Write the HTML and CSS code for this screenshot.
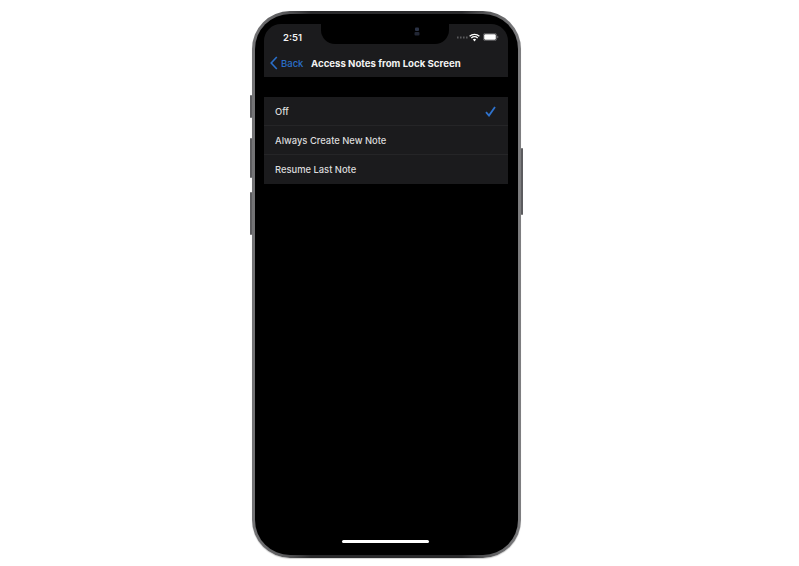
FILE: index.html
```html
<!DOCTYPE html>
<html lang="en">
<head>
<meta charset="utf-8">
<title>Access Notes from Lock Screen</title>
<link rel="stylesheet" href="styles.css">
</head>
<body>
<div class="stage">
  <div class="phone">
    <span class="btn btn-mute"></span>
    <span class="btn btn-up"></span>
    <span class="btn btn-down"></span>
    <span class="btn btn-power"></span>
    <div class="bezel">
      <div class="screen">
        <header class="top">
          <div class="status">
            <span class="time">2:51</span>
            <div class="notch">
              <svg class="cam" width="6" height="9" viewBox="0 0 6 9"><rect x="1" y="0.5" width="4" height="3.5" rx="1" fill="#2b3346"/><rect x="0.5" y="5" width="5" height="3.5" rx="1" fill="#222735"/></svg>
            </div>
            <div class="indicators">
              <svg class="dots" width="11" height="3" viewBox="0 0 11 3"><g fill="#5a5a5c"><rect x="0" y="0.5" width="1.6" height="2"/><rect x="3" y="0.5" width="1.6" height="2"/><rect x="6" y="0.5" width="1.6" height="2"/><rect x="9" y="0.5" width="1.6" height="2"/></g></svg>
              <svg class="wifi" width="11" height="9" viewBox="0 0 11 9"><g fill="none" stroke="#fff" stroke-width="1.3"><path d="M0.6 3.2a7.2 7.2 0 0 1 9.8 0"/><path d="M2.3 5a4.7 4.7 0 0 1 6.4 0"/></g><path d="M3.9 6.6a2.3 2.3 0 0 1 3.2 0L5.5 8.6z" fill="#fff"/></svg>
              <svg width="16" height="8" viewBox="0 0 16 8"><rect x="0.4" y="0.4" width="13.2" height="7.2" rx="1.8" fill="none" stroke="#77777a" stroke-width="0.7"/><rect x="1.2" y="1.2" width="11.6" height="5.6" rx="1.2" fill="#fff"/><path d="M14.3 2.8c.7.2 1.1.7 1.1 1.2s-.4 1-1.1 1.2z" fill="#77777a"/></svg>
            </div>
          </div>
          <nav class="navbar">
            <a class="back">
              <svg width="8" height="14" viewBox="0 0 8 14"><path d="M6.8 1 1.2 7l5.6 6" fill="none" stroke="#2a6fc9" stroke-width="1.6"/></svg>
              <span>Back</span>
            </a>
            <h1 class="title">Access Notes from Lock Screen</h1>
          </nav>
        </header>
        <ul class="list">
          <li class="row">
            <span>Off</span>
            <svg width="11" height="11" viewBox="0 0 11 11"><path d="M1 6.2 4 9.6 10 1" fill="none" stroke="#2f72cc" stroke-width="1.8"/></svg>
          </li>
          <li class="row">Always Create New Note</li>
          <li class="row">Resume Last Note</li>
        </ul>
        <div class="home"></div>
      </div>
    </div>
  </div>
</div>
</body>
</html>
```
FILE: styles.css
```css
* { box-sizing: border-box; }
html, body { margin: 0; height: 100%; }
body {
  background: #fff;
  overflow: hidden;
  font-family: Inter, "Liberation Sans", sans-serif;
}
.stage {
  padding: 11px 0 0 252px;
}
.phone {
  position: relative;
  width: 269px;
  height: 547px;
}
.bezel {
  height: 100%;
  padding: 3px;
  border-radius: 38px;
  background: linear-gradient(90deg, #747476 0, #5a5a5c 12%, #2a2a2c 22%, #2a2a2c 78%, #5a5a5c 88%, #7e7e80 100%);
  box-shadow: 0 1px 1px #d0d0d0;
}
.screen {
  position: relative;
  height: 100%;
  padding: 10px 9px 0;
  border-radius: 35px;
  background: #000;
}
.btn {
  position: absolute;
  width: 2px;
  background: #5c5c5f;
  border-radius: 1px;
}
.btn-mute { left: -2px; top: 84px; height: 23px; }
.btn-up { left: -2px; top: 127px; height: 40px; }
.btn-down { left: -2px; top: 181px; height: 43px; }
.btn-power { right: -2px; top: 137px; height: 67px; }
.top {
  background: #1b1b1d;
  border-radius: 17px 17px 0 0;
  height: 53px;
  width: 244px;
  display: flex;
  flex-direction: column;
}
.status {
  position: relative;
  height: 20px;
  display: flex;
  align-items: center;
  justify-content: space-between;
}
.time {
  width: 57px;
  padding: 6px 0 0 0;
  text-align: center;
  color: #f2f2f2;
  font-size: 9.5px;
  font-weight: 600;
}
.notch {
  width: 128px;
  height: 20px;
  background: #000;
  border-radius: 0 0 14px 14px;
  display: flex;
  justify-content: center;
  align-items: flex-start;
  padding: 3px 0 0 64px;
  align-self: flex-start;
}
.indicators {
  width: 59px;
  display: flex;
  align-items: center;
  padding: 6px 0 0 8px;
}
.wifi { margin-left: 1px; }
.indicators svg:last-child { margin-left: 3px; }
.navbar {
  flex: 1;
  display: flex;
  align-items: center;
  padding: 5px 0 0 6px;
}
.back {
  display: flex;
  align-items: center;
  gap: 3px;
  width: 41px;
  color: #2a6fc9;
  font-size: 9.5px;
  font-weight: 500;
}
.title {
  margin: 0;
  color: #f2f2f2;
  font-size: 9.65px;
  font-weight: 700;
  white-space: nowrap;
}
.list {
  list-style: none;
  margin: 20px 0 0;
  padding: 0;
  width: 244px;
  background: #1b1b1d;
}
.row {
  height: 29px;
  padding: 0 12px 0 11px;
  display: flex;
  align-items: center;
  justify-content: space-between;
  color: #dcdcdc;
  font-size: 9.4px;
  font-weight: 500;
  border-bottom: 1px solid #252527;
}
.row:last-child { border-bottom: 0; }
.home {
  position: absolute;
  left: 87px;
  bottom: 12px;
  width: 87px;
  height: 3px;
  border-radius: 2px;
  background: #fff;
}
```
